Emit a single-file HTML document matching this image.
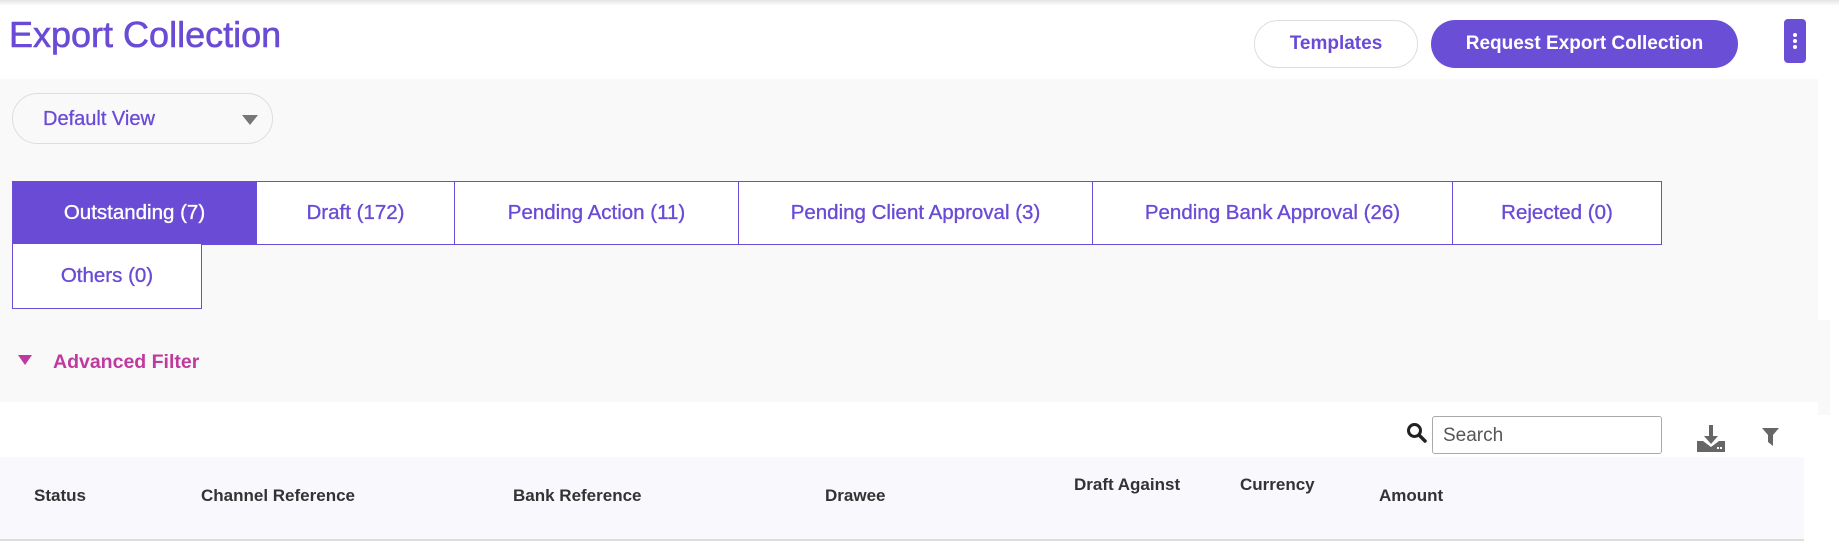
<!DOCTYPE html>
<html><head><meta charset="utf-8"><style>
*{box-sizing:border-box;margin:0;padding:0}
body{width:1839px;height:548px;background:#fff;font-family:"Liberation Sans",Arial,sans-serif;position:relative;overflow:hidden}
.a{position:absolute}
.topsh{left:0;top:0;width:1839px;height:6px;background:linear-gradient(#e4e4e4,#fff)}
.title{left:9px;top:14px;font-size:36px;color:#6a4bd6;white-space:nowrap;-webkit-text-stroke:0.6px #6a4bd6}
.btn{border-radius:26px;display:flex;align-items:center;justify-content:center;font-size:19px;font-weight:bold}
.tpl{left:1254px;top:20px;width:164px;height:48px;border:1px solid #ddd;color:#6a4bd6;background:#fff}
.req{left:1431px;top:20px;width:307px;height:48px;background:#6a4fd6;color:#fff}
.keb{left:1784px;top:19px;width:22px;height:44px;background:#6a4fd6;border-radius:4px}
.keb i{position:absolute;left:9px;width:4px;height:4px;border-radius:2px;background:#fff}
.panel{left:0;top:79px;width:1818px;height:323px;background:#f9f9f9}
.panel2{left:1818px;top:320px;width:12px;height:95px;background:#f9f9f9}
.dv{left:12px;top:93px;width:261px;height:51px;border:1px solid #ddd;border-radius:26px;background:#f9f9f9;color:#6a4bd6;font-size:20px;padding:14px 0 0 30px;-webkit-text-stroke:0.3px #6a4bd6}
.tri{width:0;height:0;border-left:8px solid transparent;border-right:8px solid transparent;border-top:10px solid #777}
.tab{height:64px;border:1px solid #6a4fd6;background:#fff;color:#6a4bd6;font-size:20.5px;display:flex;align-items:center;justify-content:center;white-space:nowrap;-webkit-text-stroke:0.35px #6a4bd6}
.tab.on{background:#6a4bd6;color:#fff;-webkit-text-stroke:0.35px #fff}
.af{left:53px;top:351px;font-size:19.5px;font-weight:bold;color:#c0399f}
.srch{left:1432px;top:416px;width:230px;height:38px;border:1px solid #aaa;border-radius:3px;background:#fff;font-size:19px;color:#555;padding:8px 0 0 10px}
.thead{left:0;top:457px;width:1804px;height:84px;background:#f8f8fd;border-bottom:2px solid #ddd}
.th{font-size:17px;font-weight:bold;color:#333;white-space:nowrap}
</style></head><body>
<div class="a topsh"></div>
<div class="a title">Export Collection</div>
<div class="a btn tpl">Templates</div>
<div class="a btn req">Request Export Collection</div>
<div class="a keb"><i style="top:14px"></i><i style="top:20px"></i><i style="top:26px"></i></div>
<div class="a panel"></div>
<div class="a panel2"></div>
<div class="a dv">Default View<div class="a tri" style="left:229px;top:21px"></div></div>

<div class="a tab on" style="left:12px;top:181px;width:245px">Outstanding (7)</div>
<div class="a tab" style="left:256px;top:181px;width:199px">Draft (172)</div>
<div class="a tab" style="left:454px;top:181px;width:285px">Pending Action (11)</div>
<div class="a tab" style="left:738px;top:181px;width:355px">Pending Client Approval (3)</div>
<div class="a tab" style="left:1092px;top:181px;width:361px">Pending Bank Approval (26)</div>
<div class="a tab" style="left:1452px;top:181px;width:210px">Rejected (0)</div>
<div class="a tab" style="left:12px;top:244px;width:190px;height:65px;border-top:none">Others (0)</div>

<div class="a" style="left:18px;top:355px;width:0;height:0;border-left:7px solid transparent;border-right:7px solid transparent;border-top:10px solid #c0399f"></div>
<div class="a af">Advanced Filter</div>

<div class="a thead"></div>
<svg class="a" style="left:1406px;top:422px" width="22" height="22" viewBox="0 0 22 22"><circle cx="8.5" cy="8.5" r="6" fill="none" stroke="#222" stroke-width="3"/><path d="M13 13 L19 19" stroke="#222" stroke-width="3.5" stroke-linecap="round"/></svg>
<div class="a srch">Search</div>
<svg class="a" style="left:1697px;top:425px" width="28" height="27" viewBox="0 0 28 27"><path d="M12 0h4v11h5l-7 8-7-8h5z" fill="#666"/><path d="M0 16h6l8 6 8-6h6v11H0z" fill="#666"/><rect x="20" y="22" width="2" height="2" fill="#fff"/><rect x="23" y="22" width="2" height="2" fill="#fff"/></svg>
<svg class="a" style="left:1762px;top:428px" width="17" height="18" viewBox="0 0 17 18"><path d="M0 0h17l-6 7v11l-5-4V7z" fill="#666"/></svg>

<div class="a th" style="left:34px;top:486px">Status</div>
<div class="a th" style="left:201px;top:486px">Channel Reference</div>
<div class="a th" style="left:513px;top:486px">Bank Reference</div>
<div class="a th" style="left:825px;top:486px">Drawee</div>
<div class="a th" style="left:1074px;top:475px">Draft Against</div>
<div class="a th" style="left:1240px;top:475px">Currency</div>
<div class="a th" style="left:1379px;top:486px">Amount</div>
</body></html>
